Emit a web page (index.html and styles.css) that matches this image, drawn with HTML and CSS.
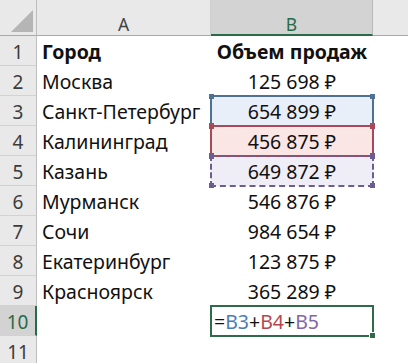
FILE: index.html
```html
<!DOCTYPE html>
<html lang="ru">
<head>
<meta charset="utf-8">
<link rel="stylesheet" href="styles.css">
</head>
<body>
<div class="sheet">
  <div class="corner"><span class="tri"></span></div>
  <div class="colhead">A</div>
  <div class="colhead sel">B</div>
  <div class="colhead last"></div>

  <div class="rowhead">1</div>
  <div class="cell bold">Город</div>
  <div class="cell center bold">Объем продаж</div>
  <div class="cell"></div>

  <div class="rowhead">2</div>
  <div class="cell">Москва</div>
  <div class="cell center">125 698 ₽</div>
  <div class="cell"></div>

  <div class="rowhead">3</div>
  <div class="cell">Санкт-Петербург</div>
  <div class="cell center ref ref-blue"><span class="txt">654 899 ₽</span><i class="h tl"></i><i class="h tr"></i><i class="h bl"></i><i class="h br"></i></div>
  <div class="cell"></div>

  <div class="rowhead">4</div>
  <div class="cell">Калининград</div>
  <div class="cell center ref ref-red"><span class="txt">456 875 ₽</span><i class="h tl"></i><i class="h tr"></i><i class="h bl"></i><i class="h br"></i></div>
  <div class="cell"></div>

  <div class="rowhead">5</div>
  <div class="cell">Казань</div>
  <div class="cell center ref ref-purple"><span class="txt">649 872 ₽</span><i class="h tl"></i><i class="h tr"></i><i class="h bl"></i><i class="h br"></i></div>
  <div class="cell"></div>

  <div class="rowhead">6</div>
  <div class="cell">Мурманск</div>
  <div class="cell center">546 876 ₽</div>
  <div class="cell"></div>

  <div class="rowhead">7</div>
  <div class="cell">Сочи</div>
  <div class="cell center">984 654 ₽</div>
  <div class="cell"></div>

  <div class="rowhead">8</div>
  <div class="cell">Екатеринбург</div>
  <div class="cell center">123 875 ₽</div>
  <div class="cell"></div>

  <div class="rowhead">9</div>
  <div class="cell">Красноярск</div>
  <div class="cell center">365 289 ₽</div>
  <div class="cell"></div>

  <div class="rowhead sel">10</div>
  <div class="cell"></div>
  <div class="cell active"><span class="txt">=<span class="f-blue">B3</span>+<span class="f-red">B4</span>+<span class="f-purple">B5</span></span><i class="fill"></i></div>
  <div class="cell"></div>

  <div class="rowhead">11</div>
  <div class="cell"></div>
  <div class="cell"></div>
  <div class="cell"></div>
</div>
</body>
</html>
```

FILE: styles.css
```css
html, body {
  margin: 0;
  padding: 0;
  background: #ffffff;
}
body {
  width: 408px;
  height: 363px;
  overflow: hidden;
  font-family: "Noto Sans", "DejaVu Sans", sans-serif;
}
.sheet {
  display: grid;
  grid-template-columns: 37px 174px 162px 1fr;
  grid-template-rows: 36px repeat(11, 30px);
}
.corner {
  position: relative;
  background: #e9e9e9;
  border-right: 1px solid #bdbdbd;
  border-bottom: 1px solid #a9a9a9;
  box-sizing: border-box;
}
.tri {
  position: absolute;
  right: 3px;
  bottom: 3px;
  width: 0;
  height: 0;
  border-left: 22px solid transparent;
  border-bottom: 22px solid #b5b5b5;
}
.colhead {
  background: #e9e9e9;
  border-right: 1px solid #cfcfcf;
  border-bottom: 1px solid #a9a9a9;
  box-sizing: border-box;
  text-align: center;
  font-size: 17.5px;
  line-height: 20px;
  padding-top: 14px;
  color: #444;
}
.colhead.sel {
  background: #d3d3d3;
  color: #2a6b47;
  border-right: 1px solid #b8b8b8;
  border-bottom: 2px solid #2a6b47;
}
.colhead.last {
  border-right: none;
}
.rowhead {
  background: #e9e9e9;
  border-right: 1px solid #bdbdbd;
  border-bottom: 1px solid #d2d2d2;
  box-sizing: border-box;
  text-align: center;
  font-size: 19px;
  line-height: 30px;
  padding-top: 1px;
  color: #3c3c3c;
}
.rowhead.sel {
  background: #d3d3d3;
  color: #2a6b47;
  border-right: 2px solid #2a6b47;
}
.cell {
  position: relative;
  font-size: 19.5px;
  line-height: 30px;
  padding: 1px 0 0 5px;
  box-sizing: border-box;
  color: #111;
  white-space: nowrap;
}
.cell.center {
  text-align: center;
  padding-left: 0;
}
.cell.bold {
  font-weight: 700;
}
.txt {
  position: relative;
  z-index: 2;
}
.ref::after {
  content: "";
  position: absolute;
  left: -1px;
  right: -1px;
  top: -1px;
  bottom: -1px;
  border: 2px solid;
  z-index: 1;
}
.ref-blue { background: #e9eff8; }
.ref-blue::after { border-color: #4f7193; }
.ref-red { background: #fbe6e6; }
.ref-red::after { border-color: #a84858; }
.ref-purple { background: #efedf5; }
.ref-purple::after { border-color: #6c5c92; border-style: dashed; }
.h {
  position: absolute;
  width: 5px;
  height: 5px;
  z-index: 3;
}
.ref-blue .h { background: #4f7193; }
.ref-red .h { background: #a84858; }
.ref-purple .h { background: #6c5c92; }
.h.tl { left: -2px; top: -2px; }
.h.tr { right: -2px; top: -2px; }
.h.bl { left: -2px; bottom: -2px; }
.h.br { right: -2px; bottom: -2px; }
.active {
  padding-left: 3px;
}
.active::after {
  content: "";
  position: absolute;
  left: -1px;
  right: -1px;
  top: -1px;
  bottom: -1px;
  border: 2px solid #2f6b4a;
  z-index: 1;
}
.fill {
  position: absolute;
  right: -3px;
  bottom: -3px;
  width: 5px;
  height: 5px;
  background: #2f6b4a;
  border: 1px solid #fff;
  z-index: 3;
}
.f-blue { color: #4b7db5; }
.f-red { color: #b6474f; }
.f-purple { color: #8267a8; }
```
